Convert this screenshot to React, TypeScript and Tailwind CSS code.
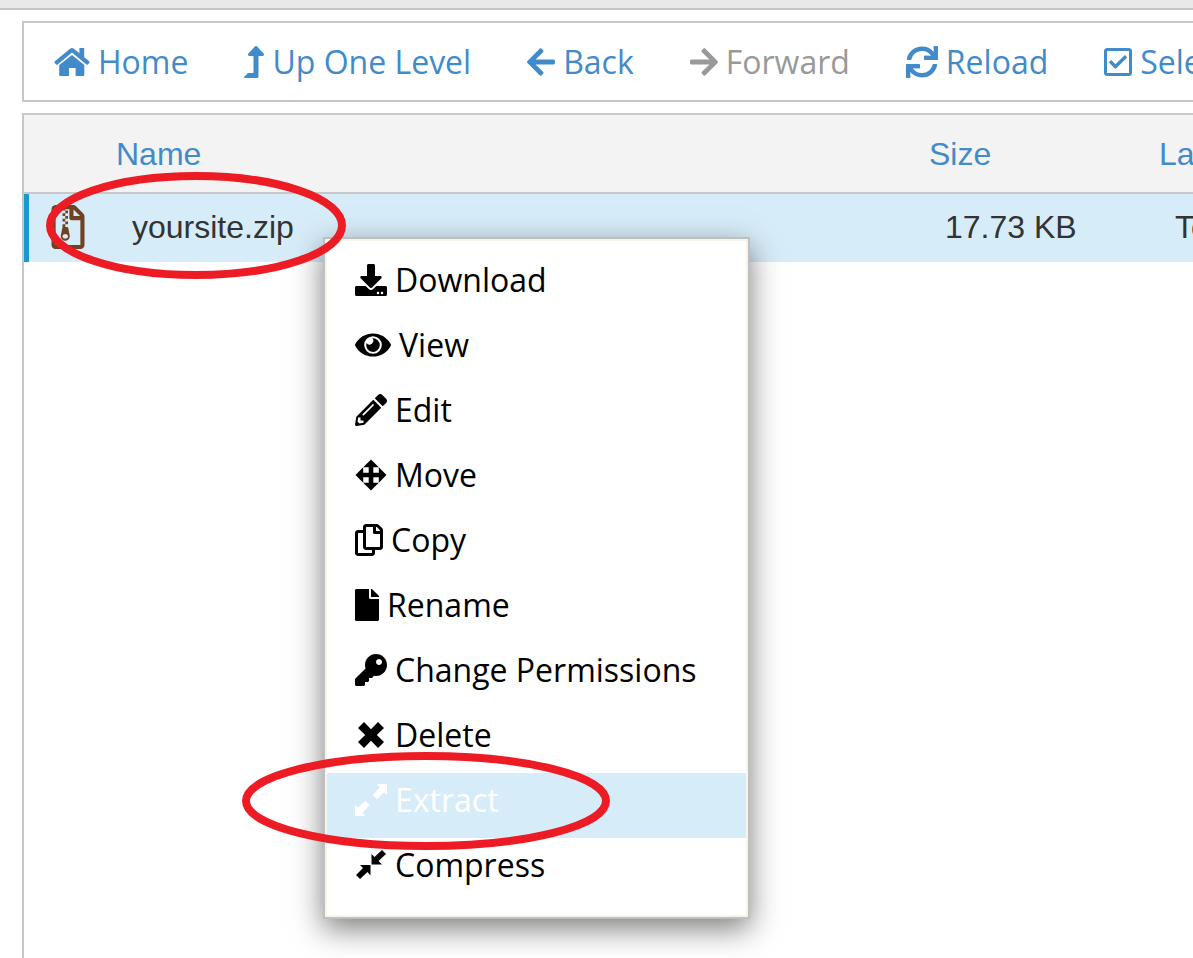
import type { ComponentType } from "react";
import {
  FaArrowLeft,
  FaArrowRight,
  FaDownload,
  FaFile,
  FaKey,
  FaLevelUpAlt,
  FaPencilAlt,
  FaRegCheckSquare,
  FaRegCopy,
  FaRegFileArchive,
  FaSync,
} from "react-icons/fa";

type Icon = ComponentType<{ className?: string }>;

function HomeIcon({ className }: { className?: string }) {
  return (
    <svg viewBox="0 0 36 32" fill="currentColor" aria-hidden="true" className={className}>
      <path d="M16.4 2.6Q18 1.4 19.6 2.6L25.4 7.3V2H30.2V11.2L35.2 15.3Q35.9 16 35.3 16.8L34 18.4Q33.2 19.1 32.4 18.5L18 6.6 3.6 18.5Q2.8 19.1 2 18.4L0.7 16.8Q0.1 16 0.8 15.3Z" />
      <path d="M18 9 30.3 19.1V29Q30.3 30 29.3 30H21.6V22H15V30H6.2Q5.2 30 5.2 29V19.1Z" />
    </svg>
  );
}

function EyeIcon({ className }: { className?: string }) {
  return (
    <svg viewBox="0 0 36 32" fill="currentColor" aria-hidden="true" className={className}>
      <path
        fillRule="evenodd"
        d="M0.3 15.1C3.8 8.6 10.4 4.5 18 4.5S32.2 8.6 35.7 15.1Q36.2 16 35.7 16.9C32.2 23.4 25.6 27.5 18 27.5S3.8 23.4 0.3 16.9Q-0.2 16 0.3 15.1ZM18 7.2A8.8 8.8 0 1 0 18 24.8A8.8 8.8 0 1 0 18 7.2Z"
      />
      <path d="M17.4 9.3A6.8 6.8 0 1 1 11.5 14.1A3.4 3.4 0 1 0 17.4 9.3Z" />
    </svg>
  );
}

function MoveIcon({ className }: { className?: string }) {
  return (
    <svg viewBox="0 0 32 32" fill="currentColor" aria-hidden="true" className={className}>
      <path d="M16 0.5 23.8 8.2H18.3V13.7H23.8V8.2L31.5 16 23.8 23.8V18.3H18.3V23.8H23.8L16 31.5 8.2 23.8H13.7V18.3H8.2V23.8L0.5 16 8.2 8.2V13.7H13.7V8.2H8.2Z" />
    </svg>
  );
}

function DeleteIcon({ className }: { className?: string }) {
  return (
    <svg viewBox="0 0 32 32" fill="currentColor" aria-hidden="true" className={className}>
      <path d="M9 3 16 10.2 23 3 29 9 21.8 16 29 23 23 29 16 21.8 9 29 3 23 10.2 16 3 9Z" />
    </svg>
  );
}

function ExtractIcon({ className }: { className?: string }) {
  return (
    <svg viewBox="0 0 32 32" fill="currentColor" aria-hidden="true" className={className}>
      <path d="M21.5 0H32V11L29 8.2 22 15.2 17.5 11 25 3.5Z" />
      <path d="M10.5 32H0V21L3 23.8 10.5 17 14.8 21 7.3 28.5Z" />
    </svg>
  );
}

function CompressIcon({ className }: { className?: string }) {
  return (
    <svg viewBox="0 0 32 32" fill="currentColor" aria-hidden="true" className={className}>
      <path d="M27 1 31 5 23.5 12 27 15.5H16.5V5L19.5 8Z" />
      <path d="M5 30 1 26 8 19 5 16H15.5V26.5L12.5 23Z" />
    </svg>
  );
}

const toolbar: { label: string; icon: Icon; size: string; disabled?: boolean }[] = [
  { label: "Home", icon: HomeIcon, size: "h-8 w-9" },
  { label: "Up One Level", icon: FaLevelUpAlt, size: "h-8 w-5" },
  { label: "Back", icon: FaArrowLeft, size: "h-8 w-7" },
  { label: "Forward", icon: FaArrowRight, size: "h-8 w-7", disabled: true },
  { label: "Reload", icon: FaSync, size: "h-8 w-8" },
  { label: "Select All", icon: FaRegCheckSquare, size: "h-8 w-7" },
];

const menu: { label: string; icon: Icon; size: string; active?: boolean }[] = [
  { label: "Download", icon: FaDownload, size: "h-8 w-8" },
  { label: "View", icon: EyeIcon, size: "h-8 w-9" },
  { label: "Edit", icon: FaPencilAlt, size: "h-8 w-8" },
  { label: "Move", icon: MoveIcon, size: "h-8 w-8" },
  { label: "Copy", icon: FaRegCopy, size: "h-8 w-7" },
  { label: "Rename", icon: FaFile, size: "h-8 w-6" },
  { label: "Change Permissions", icon: FaKey, size: "h-8 w-8" },
  { label: "Delete", icon: DeleteIcon, size: "h-8 w-8" },
  { label: "Extract", icon: ExtractIcon, size: "h-8 w-8", active: true },
  { label: "Compress", icon: CompressIcon, size: "h-8 w-8" },
];

function Toolbar() {
  return (
    <nav
      aria-label="File actions"
      className="flex h-[81px] shrink-0 items-center gap-14 overflow-hidden border-2 border-r-0 border-[#c8c8c8] pl-[30px]"
    >
      {toolbar.map(({ label, icon: ItemIcon, size, disabled }) => (
        <button
          key={label}
          type="button"
          disabled={disabled}
          className="flex shrink-0 items-center gap-2 whitespace-nowrap text-[#428bca] disabled:text-[#999999]"
        >
          <ItemIcon className={size} />
          {label}
        </button>
      ))}
    </nav>
  );
}

function ContextMenu() {
  return (
    <div className="absolute left-[299px] top-[122px] z-10 w-[427px] border-2 border-[#bfc0bd] bg-white font-['Open_Sans','Noto_Sans',sans-serif] shadow-[0_10px_28px_rgba(0,0,0,0.5)]">
      <ul role="menu" className="border-2 border-[#f5f5eb] py-3">
        {menu.map(({ label, icon: ItemIcon, size, active }) => (
          <li key={label} role="none" className="relative">
            <button
              type="button"
              role="menuitem"
              className={
                active
                  ? "flex h-[65px] w-full items-center gap-2 bg-[#d7ecf9] pb-3 pl-7 text-white"
                  : "flex h-[65px] w-full items-center gap-2 pb-3 pl-7 text-black"
              }
            >
              <ItemIcon className={size} />
              {label}
            </button>
            {active && (
              <svg
                viewBox="0 0 368 98"
                fill="none"
                aria-hidden="true"
                className="pointer-events-none absolute -left-[85px] -top-[21px] z-20 w-[368px]"
              >
                <ellipse cx="184" cy="49" rx="180" ry="45" stroke="#ed1c24" strokeWidth="8" />
              </svg>
            )}
          </li>
        ))}
      </ul>
    </div>
  );
}

function FileTable() {
  return (
    <section className="relative grow border-l-2 border-t-2 border-[#c8c8c8] font-['Liberation_Sans',Arial,sans-serif]">
      <table className="w-[calc(100%+260px)] table-fixed border-separate border-spacing-0 text-left">
        <colgroup>
          <col className="w-[76px]" />
          <col />
          <col className="w-[230px]" />
          <col className="w-[310px]" />
        </colgroup>
        <thead>
          <tr className="h-[79px] bg-[#f3f3f3] text-[#428bca]">
            <th aria-label="Type" className="border-b-2 border-[#c8c8c8] p-0" />
            <th className="border-b-2 border-[#c8c8c8] px-4 py-0 font-normal">Name</th>
            <th className="border-b-2 border-[#c8c8c8] px-4 py-0 font-normal">Size</th>
            <th className="border-b-2 border-[#c8c8c8] px-4 py-0 font-normal">Last Modified</th>
          </tr>
        </thead>
        <tbody>
          <tr className="h-[68px] bg-[#d7ecf9] text-[#333333]">
            <td className="border-l-[5px] border-[#1a98d5] pb-0.5 pl-[17px] pr-0 pt-0 text-[#6f4322]">
              <FaRegFileArchive className="h-11 w-11" />
            </td>
            <td className="pb-0.5 pl-8 pr-0 pt-0">yoursite.zip</td>
            <td className="pb-0.5 pl-8 pr-0 pt-0">17.73 KB</td>
            <td className="pb-0.5 pl-8 pr-0 pt-0">Today</td>
          </tr>
        </tbody>
      </table>
      <svg
        viewBox="0 0 300 107"
        fill="none"
        aria-hidden="true"
        className="pointer-events-none absolute left-[22px] top-[57px] z-20 w-[300px]"
      >
        <ellipse cx="150" cy="53.5" rx="146" ry="49.5" stroke="#ed1c24" strokeWidth="8" />
      </svg>
      <ContextMenu />
    </section>
  );
}

export default function App() {
  return (
    <div className="flex min-h-screen flex-col overflow-hidden bg-white font-['Open_Sans','Noto_Sans',sans-serif] text-[32px] leading-10">
      <div className="h-[10px] shrink-0 border-b-2 border-[#c4c6c6] bg-[#e9e9e9]" />
      <main className="flex grow flex-col gap-[11px] pl-[22px] pt-[11px]">
        <Toolbar />
        <FileTable />
      </main>
    </div>
  );
}
